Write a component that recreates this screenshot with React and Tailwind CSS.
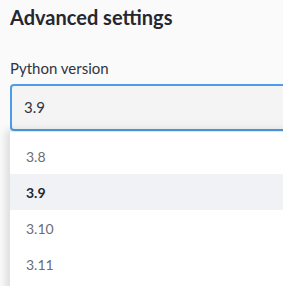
export default function App() {
  const items = ["3.8", "3.9", "3.10", "3.11"];
  return (
    <div className="w-[283px] h-[286px] overflow-hidden bg-[#fafafa] relative" style={{ fontFamily: '"Lato", "Liberation Sans", sans-serif' }}>
      <div className="pl-[10px] pt-[3px]">
        <h2 className="text-[20px] leading-[28px] font-bold text-[#262730]">Advanced settings</h2>
        <div className="mt-[27px] text-[15px] leading-[20px] text-[#31333f]">Python version</div>
        <div className="mt-[6px] w-[290px] h-[47px] rounded-[4px] border-[2px] border-[#4b9de8] bg-[#f4f4f5] flex items-center pl-[12px] text-[15px] text-[#31333f]">
          3.9
        </div>
      </div>
      <div className="absolute left-[10px] top-[132px] w-[290px] h-[170px] bg-white pt-[6px] shadow-[-4px_-2px_8px_rgba(0,0,0,0.12)]">
        {items.map((v) => (
          <div
            key={v}
            className={
              "h-[36px] flex items-center pl-[16px] text-[14px] " +
              (v === "3.9" ? "bg-[#f0f2f6] font-bold text-[#262730]" : "text-[#6b6d76]")
            }
          >
            {v}
          </div>
        ))}
      </div>
    </div>
  );
}
